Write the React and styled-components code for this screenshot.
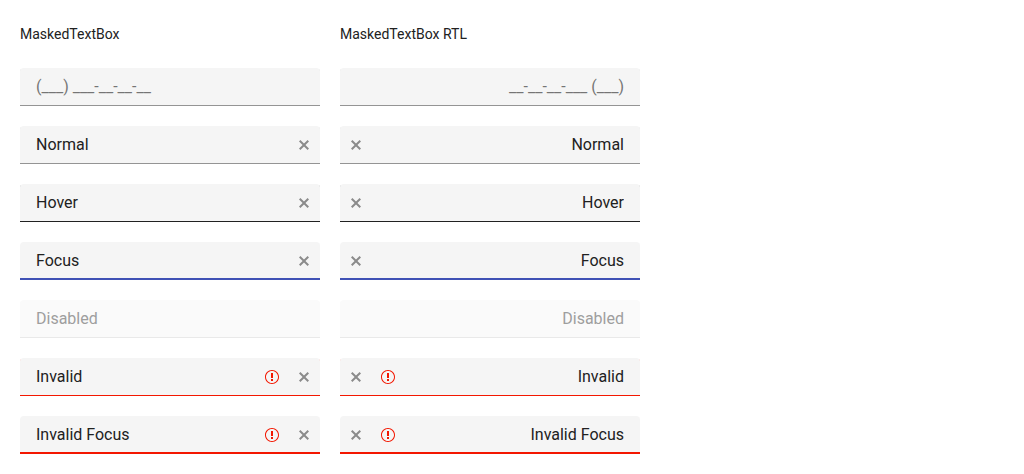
import React from "react";
import styled, { createGlobalStyle } from "styled-components";

const GlobalStyle = createGlobalStyle`
  *, *::before, *::after { box-sizing: border-box; }
  body {
    margin: 0;
    background: #ffffff;
    color: #212121;
    font-family: Roboto, "Liberation Sans", sans-serif;
    font-size: 14px;
    line-height: 20px;
  }
`;

const Page = styled.main`
  display: grid;
  grid-template-columns: repeat(auto-fit, 300px);
  gap: 20px;
  padding: 24px 20px 20px;
`;

const Column = styled.section`
  display: flex;
  flex-direction: column;
  gap: 20px;
`;

const Title = styled.h2`
  margin: 0 0 4px;
  font-size: 14px;
  line-height: 20px;
  font-weight: 400;
  color: #212121;
`;

const lineColors = {
  normal: "#949494",
  hover: "#212121",
  focus: "#3f51b5",
  disabled: "#e9e9e9",
  invalid: "#f31700",
};

const Field = styled.div`
  display: flex;
  align-items: center;
  overflow: hidden;
  border-radius: 4px 4px 0 0;
  background: ${(p) => (p.$line === "disabled" ? "#fafafa" : "#f5f5f5")};
  color: ${(p) => (p.$line === "disabled" ? "#9e9e9e" : "#212121")};
  box-shadow: inset 0 ${(p) => (p.$thick ? "-2px" : "-1px")} 0 ${(p) => lineColors[p.$line]};
`;

const Input = styled.input`
  flex: 1;
  min-width: 0;
  margin: 0;
  padding: 6px 16px 8px;
  border: 0;
  outline: 0;
  background: transparent;
  color: inherit;
  font: inherit;
  font-size: 16px;
  line-height: 24px;
  height: 38px;

  &::placeholder {
    color: #757575;
    opacity: 1;
  }
`;

const Icon = styled.svg`
  display: block;
  width: 16px;
  height: 16px;
  fill: currentColor;
`;

const Validation = styled.span`
  flex: none;
  padding: 0 8px;
  color: #f31700;
`;

const ClearButton = styled.button`
  flex: none;
  margin: 0;
  padding: 8px;
  border: 0;
  background: transparent;
  color: #8b8b8b;
  cursor: pointer;
`;

const fields = [
  { label: "Empty", line: "normal", placeholder: "(___) ___-__-__-__" },
  { label: "Normal", value: "Normal", line: "normal" },
  { label: "Hover", value: "Hover", line: "hover" },
  { label: "Focus", value: "Focus", line: "focus", thick: true },
  { label: "Disabled", value: "Disabled", line: "disabled" },
  { label: "Invalid", value: "Invalid", line: "invalid" },
  { label: "Invalid Focus", value: "Invalid Focus", line: "invalid", thick: true },
];

function MaskedTextBox({ label, value = "", line, placeholder, thick }) {
  const disabled = line === "disabled";
  const invalid = line === "invalid";
  return (
    <Field $line={line} $thick={thick}>
      <Input
        type="text"
        aria-label={label}
        aria-invalid={invalid}
        defaultValue={value}
        placeholder={placeholder}
        disabled={disabled}
      />
      {invalid && (
        <Validation>
          <Icon viewBox="0 0 512 512" aria-hidden="true">
            <path d="M256 32C132.3 32 32 132.3 32 256s100.3 224 224 224 224-100.3 224-224S379.7 32 256 32m0 416c-106 0-192-86-192-192S150 64 256 64s192 86 192 192-86 192-192 192m32-64h-64v-64h64zm0-96h-64V128h64z" />
          </Icon>
        </Validation>
      )}
      {value && !disabled && (
        <ClearButton type="button" aria-label={`Clear ${label}`}>
          <Icon viewBox="0 0 512 512" aria-hidden="true">
            <path d="M416 141.3 370.7 96 256 210.7 141.3 96 96 141.3 210.7 256 96 370.7 141.3 416 256 301.3 370.7 416 416 370.7 301.3 256z" />
          </Icon>
        </ClearButton>
      )}
    </Field>
  );
}

function FieldList() {
  return fields.map((field) => <MaskedTextBox key={field.label} {...field} />);
}

export default function App() {
  return (
    <>
      <GlobalStyle />
      <Page>
        <Column>
          <Title>MaskedTextBox</Title>
          <FieldList />
        </Column>
        <Column dir="rtl">
          <Title dir="ltr">MaskedTextBox RTL</Title>
          <FieldList />
        </Column>
      </Page>
    </>
  );
}
